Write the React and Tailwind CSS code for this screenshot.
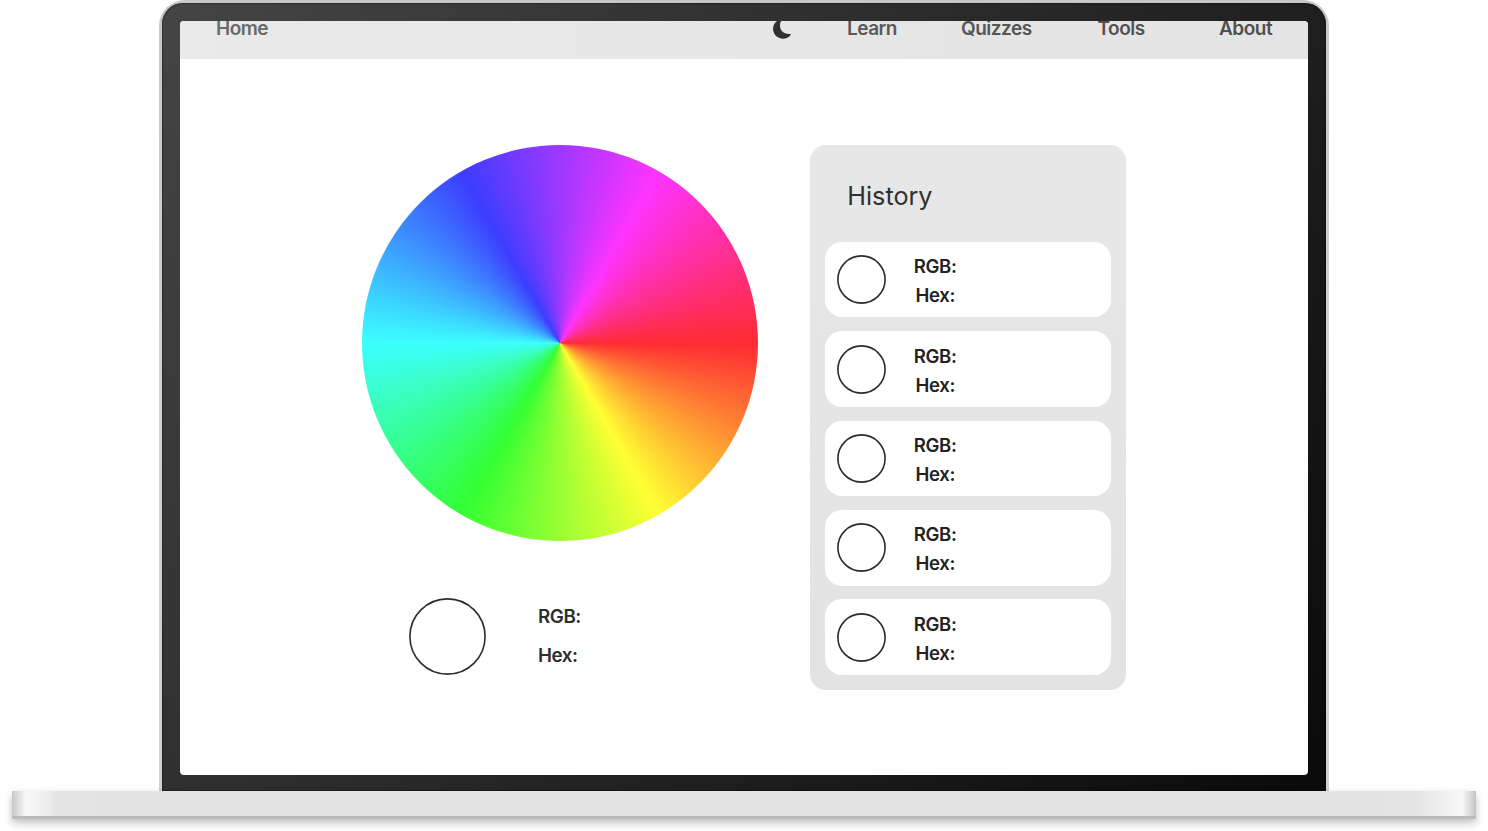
const entries = [1, 2, 3, 4, 5];

function Moon() {
  return (
    <svg className="h-[22px] w-[22px] shrink-0" viewBox="0 0 22 22" fill="#2f3030">
      <path d="M10.2 2A9.9 9.9 0 1 0 18.7 18Q19.5 17 18.2 17C13 17.6 8.4 14.4 8 9.6C7.8 6.6 8.6 4.2 10.2 2Z" />
    </svg>
  );
}

function Swatch({ size, className }) {
  return (
    <svg className={className} viewBox={`0 0 ${size} ${size}`} fill="#fff" stroke="#2c2c2c" strokeWidth="1.6">
      <circle cx={size / 2} cy={size / 2} r={size / 2 - 0.9} />
    </svg>
  );
}

function HistoryEntry() {
  return (
    <li className="flex h-[75.5px] items-center rounded-[17px] bg-white pl-[12px]">
      <Swatch size={49} className="h-[49px] w-[49px] shrink-0" />
      <div className="ml-[27px] flex w-[45px] flex-col items-center pt-[3.4px] text-[18.6px] font-semibold leading-[29.2px] tracking-[-0.35px] text-[#222]">
        <span>RGB:</span>
        <span>Hex:</span>
      </div>
    </li>
  );
}

export default function App() {
  return (
    <div className="flex h-[831px] w-[1488px] flex-col items-center overflow-hidden bg-white font-['Inter',sans-serif]">
      <div className="h-[791px] w-[1170px] rounded-t-[26px] bg-linear-to-b from-[#c6c8c7] via-[#d2d4d3] to-[#cfd0cf] px-[3px] pt-[3px]">
        <div className="h-[788px] rounded-t-[21px] bg-[linear-gradient(128deg,#454545,#0a0a0a)] px-[18px] pt-[18px] shadow-[inset_0_0_2px_#000]">
          <div className="h-[754px] overflow-hidden rounded-[4px] bg-white">
            <nav className="flex h-[38.4px] items-start justify-between bg-linear-to-r from-[#e9e9e9] to-[#e4e4e4] pl-[36px] pr-[35px] text-[19px] font-semibold leading-[16px] tracking-[-0.5px]">
              <a className="text-[#696969]">Home</a>
              <div className="flex items-start">
                <span className="-mt-[4px] mr-[53px] block"><Moon /></span>
                <a className="w-[114px] text-[#595959]">Learn</a>
                <a className="w-[136.5px] text-[#565656]">Quizzes</a>
                <a className="w-[121.5px] text-[#525252]">Tools</a>
                <a className="w-[54px] text-[#505050]">About</a>
              </div>
            </nav>
            <main className="flex items-start pl-[181.7px] pt-[85.6px]">
              <section className="w-[448px]">
                <div className="h-[396.5px] w-[396.5px] rounded-full bg-[conic-gradient(from_90deg,#ff2b33,#ffff33_60deg,#33ff33_120deg,#3cffff_180deg,#3d3dff_240deg,#ff33ff_300deg,#ff2b33)]" />
                <div className="mt-[56px] flex items-center pl-[47.8px]">
                  <Swatch size={77} className="h-[77px] w-[77px] shrink-0" />
                  <div className="ml-[51.4px] flex flex-col pt-px text-[18.8px] font-semibold leading-[38.5px] tracking-[-0.4px] text-[#2d2d2d]">
                    <span>RGB:</span>
                    <span>Hex:</span>
                  </div>
                </div>
              </section>
              <aside className="h-[545px] w-[316.4px] rounded-[16px] bg-linear-to-b from-[#e7e7e7] to-[#e3e3e3] px-[15px] pt-[31px]">
                <h2 className="pl-[22.6px] text-[25.2px] leading-[41px] text-[#303030]">History</h2>
                <ul className="mt-[25px] flex flex-col gap-[13.85px]">
                  {entries.map((id) => <HistoryEntry key={id} />)}
                </ul>
              </aside>
            </main>
          </div>
        </div>
      </div>
      <div className="h-[28px] w-[1464px] shrink-0 bg-[linear-gradient(90deg,#c8c8c8,#f8f8f8_14px,#f0f0f0_30px,#e4e4e4_46px,#e3e3e3_50%,#e4e4e4_calc(100%-60px),#f8f8f8_calc(100%-14px),#c4c4c4)] shadow-[0_4px_8px_rgba(0,0,0,0.25)]">
        <div className="h-[25px]" />
        <div className="h-px bg-[#b7b9b8]" />
        <div className="h-[2px] bg-[#bcbebd]" />
      </div>
    </div>
  );
}
